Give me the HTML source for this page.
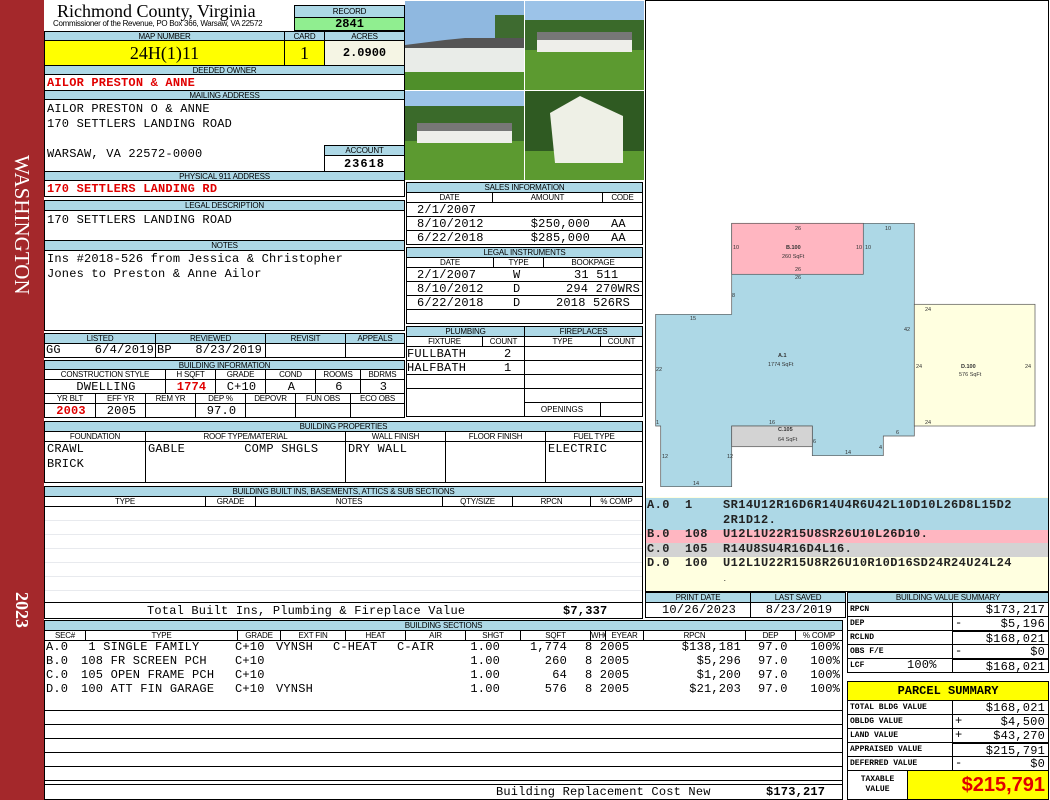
<!DOCTYPE html>
<html><head><meta charset="utf-8"><style>
*{margin:0;padding:0;box-sizing:border-box}
body{width:1050px;height:800px;background:#fff;position:relative;overflow:hidden;font-family:"Liberation Mono",monospace;font-size:12px;color:#000}
div{position:absolute;white-space:nowrap;overflow:hidden}
.b{border:1px solid #000}
.h{background:#add8e6;border:1px solid #000;font:8px/9px "Liberation Sans",sans-serif;text-align:center;letter-spacing:-0.2px}
.m{font:12px/14px "Liberation Mono",monospace;letter-spacing:0.2px;padding-left:2px}
.t{font:12px/14px "Liberation Mono",monospace;letter-spacing:0.2px;overflow:visible}
.r{text-align:right;padding-right:3px}
.c{text-align:center}
.red{color:#e00000;font-weight:bold}
.s{font:bold 8px/13px "Liberation Mono",monospace;padding-left:2px}
</style></head><body>
<!-- sidebar -->
<div style="left:0;top:0;width:44px;height:800px;background:#a4282b"></div>
<div style="left:8px;top:155px;width:28px;height:170px;"><div style="left:0;top:0;width:170px;height:28px;transform-origin:0 0;transform:translate(28px,0) rotate(90deg);font:21px/28px 'Liberation Serif',serif;color:#fff;text-align:left">WASHINGTON</div></div>
<div style="left:8px;top:592px;width:28px;height:40px;"><div style="left:0;top:0;width:40px;height:28px;transform-origin:0 0;transform:translate(28px,0) rotate(90deg);font:bold 18px/28px 'Liberation Serif',serif;color:#fff">2023</div></div>

<!-- title -->
<div style="left:57px;top:1px;width:230px;height:20px;font:18px/20px 'Liberation Serif',serif">Richmond County, Virginia</div>
<div style="left:53px;top:19px;width:240px;height:10px;font:8px/10px 'Liberation Sans',sans-serif;letter-spacing:-0.3px">Commissioner of the Revenue, PO Box 366, Warsaw, VA 22572</div>
<div class="h" style="left:294px;top:5px;width:111px;height:13px;line-height:11px">RECORD</div>
<div class="b" style="left:294px;top:17px;width:111px;height:14px;background:#90ee90;font:bold 12px/12px 'Liberation Mono',monospace;text-align:center">2841</div>

<div class="h" style="left:44px;top:31px;width:241px;height:10px">MAP NUMBER</div>
<div class="h" style="left:284px;top:31px;width:41px;height:10px">CARD</div>
<div class="h" style="left:324px;top:31px;width:81px;height:10px">ACRES</div>
<div class="b" style="left:44px;top:40px;width:241px;height:26px;background:#ffff00;font:18px/24px 'Liberation Serif',serif;text-align:center">24H(1)11</div>
<div class="b" style="left:284px;top:40px;width:41px;height:26px;background:#ffff00;font:18px/24px 'Liberation Serif',serif;text-align:center">1</div>
<div class="b" style="left:324px;top:40px;width:81px;height:26px;background:#f5f5e4;font:bold 12px/24px 'Liberation Mono',monospace;text-align:center">2.0900</div>

<div class="h" style="left:44px;top:65px;width:361px;height:10px">DEEDED OWNER</div>
<div class="b m red" style="left:44px;top:74px;width:361px;height:17px;line-height:17px">AILOR PRESTON &amp; ANNE</div>
<div class="h" style="left:44px;top:90px;width:361px;height:10px">MAILING ADDRESS</div>
<div class="b" style="left:44px;top:99px;width:361px;height:73px"></div>
<div class="m" style="left:45px;top:102px;width:270px;height:60px;white-space:pre;line-height:15px">AILOR PRESTON O &amp; ANNE
170 SETTLERS LANDING ROAD

WARSAW, VA 22572-0000</div>
<div class="h" style="left:324px;top:145px;width:81px;height:11px">ACCOUNT</div>
<div class="b" style="left:324px;top:155px;width:81px;height:17px;font:bold 12px/16px 'Liberation Mono',monospace;text-align:center;letter-spacing:1px">23618</div>
<div class="h" style="left:44px;top:171px;width:361px;height:10px">PHYSICAL 911 ADDRESS</div>
<div class="b m red" style="left:44px;top:180px;width:361px;height:17px;line-height:17px">170 SETTLERS LANDING RD</div>

<div class="h" style="left:44px;top:200px;width:361px;height:11px">LEGAL DESCRIPTION</div>
<div class="b m" style="left:44px;top:210px;width:361px;height:31px;padding-top:2px">170 SETTLERS LANDING ROAD</div>
<div class="h" style="left:44px;top:240px;width:361px;height:11px">NOTES</div>
<div class="b m" style="left:44px;top:250px;width:361px;height:81px;white-space:pre;line-height:15px;padding-top:1px">Ins #2018-526 from Jessica &amp; Christopher
Jones to Preston &amp; Anne Ailor</div>

<!-- listed -->
<div class="h" style="left:44px;top:333px;width:112px;height:11px">LISTED</div>
<div class="h" style="left:155px;top:333px;width:111px;height:11px">REVIEWED</div>
<div class="h" style="left:265px;top:333px;width:81px;height:11px">REVISIT</div>
<div class="h" style="left:345px;top:333px;width:60px;height:11px">APPEALS</div>
<div class="b" style="left:44px;top:343px;width:112px;height:15px"></div>
<div class="b" style="left:155px;top:343px;width:111px;height:15px"></div>
<div class="b" style="left:265px;top:343px;width:81px;height:15px"></div>
<div class="b" style="left:345px;top:343px;width:60px;height:15px"></div>
<div class="t" style="left:46px;top:343px;width:20px;height:14px">GG</div>
<div class="t r" style="left:80px;top:343px;width:76px;height:14px;padding-right:2px">6/4/2019</div>
<div class="t" style="left:157px;top:343px;width:20px;height:14px">BP</div>
<div class="t r" style="left:180px;top:343px;width:85px;height:14px;padding-right:3px">8/23/2019</div>

<!-- building info -->
<div class="h" style="left:44px;top:360px;width:361px;height:10px">BUILDING INFORMATION</div>
<div class="h" style="left:44px;top:369px;width:122px;height:11px;background:#fff">CONSTRUCTION STYLE</div>
<div class="h" style="left:165px;top:369px;width:51px;height:11px;background:#fff">H SQFT</div>
<div class="h" style="left:215px;top:369px;width:51px;height:11px;background:#fff">GRADE</div>
<div class="h" style="left:265px;top:369px;width:51px;height:11px;background:#fff">COND</div>
<div class="h" style="left:315px;top:369px;width:46px;height:11px;background:#fff">ROOMS</div>
<div class="h" style="left:360px;top:369px;width:45px;height:11px;background:#fff">BDRMS</div>
<div class="b m c" style="left:44px;top:379px;width:122px;height:15px">DWELLING</div>
<div class="b m c red" style="left:165px;top:379px;width:51px;height:15px">1774</div>
<div class="b m c" style="left:215px;top:379px;width:51px;height:15px">C+10</div>
<div class="b m c" style="left:265px;top:379px;width:51px;height:15px">A</div>
<div class="b m c" style="left:315px;top:379px;width:46px;height:15px">6</div>
<div class="b m c" style="left:360px;top:379px;width:45px;height:15px">3</div>
<div class="h" style="left:44px;top:393px;width:52px;height:11px;background:#fff">YR BLT</div>
<div class="h" style="left:95px;top:393px;width:51px;height:11px;background:#fff">EFF YR</div>
<div class="h" style="left:145px;top:393px;width:51px;height:11px;background:#fff">REM YR</div>
<div class="h" style="left:195px;top:393px;width:51px;height:11px;background:#fff">DEP %</div>
<div class="h" style="left:245px;top:393px;width:51px;height:11px;background:#fff">DEPOVR</div>
<div class="h" style="left:295px;top:393px;width:56px;height:11px;background:#fff">FUN OBS</div>
<div class="h" style="left:350px;top:393px;width:55px;height:11px;background:#fff">ECO OBS</div>
<div class="b m c red" style="left:44px;top:403px;width:52px;height:15px">2003</div>
<div class="b m c" style="left:95px;top:403px;width:51px;height:15px">2005</div>
<div class="b m" style="left:145px;top:403px;width:51px;height:15px"></div>
<div class="b m c" style="left:195px;top:403px;width:51px;height:15px">97.0</div>
<div class="b" style="left:245px;top:403px;width:51px;height:15px"></div>
<div class="b" style="left:295px;top:403px;width:56px;height:15px"></div>
<div class="b" style="left:350px;top:403px;width:55px;height:15px"></div>

<!-- photos -->
<div style="left:405px;top:0;width:240px;height:181px;background:#fff">
<svg width="240" height="181">
<g>
<rect x="0" y="1" width="119" height="89" fill="#8fb8e0"/><rect x="90" y="15" width="29" height="35" fill="#3e6b30"/><rect x="0" y="70" width="119" height="20" fill="#4f8f2a"/>
<polygon points="0,45 40,40 60,38 119,38 119,50 0,50" fill="#555"/><rect x="0" y="48" width="119" height="24" fill="#e9ece8"/>
</g>
<g transform="translate(120,0)">
<rect x="0" y="1" width="119" height="89" fill="#9cc3e8"/><rect x="0" y="20" width="119" height="35" fill="#3a6a2a"/><rect x="0" y="50" width="119" height="40" fill="#5c9a30"/>
<rect x="12" y="32" width="95" height="9" fill="#777"/><rect x="12" y="40" width="95" height="12" fill="#eeeeea"/>
</g>
<g transform="translate(0,91)">
<rect x="0" y="0" width="119" height="89" fill="#9cc3e8"/><rect x="0" y="15" width="119" height="35" fill="#3a6a2a"/><rect x="0" y="50" width="119" height="39" fill="#5c9a30"/>
<rect x="12" y="32" width="95" height="9" fill="#777"/><rect x="12" y="40" width="95" height="12" fill="#eeeeea"/>
</g>
<g transform="translate(120,91)">
<rect x="0" y="0" width="119" height="89" fill="#2f5a22"/><rect x="0" y="60" width="119" height="29" fill="#5c9a30"/>
<polygon points="25,22 55,5 98,25 98,72 30,72" fill="#eef0e6"/>
</g>
</svg></div>

<!-- sales -->
<div class="h" style="left:406px;top:182px;width:237px;height:11px">SALES INFORMATION</div>
<div class="h" style="left:406px;top:192px;width:87px;height:11px;background:#fff">DATE</div>
<div class="h" style="left:492px;top:192px;width:111px;height:11px;background:#fff">AMOUNT</div>
<div class="h" style="left:602px;top:192px;width:41px;height:11px;background:#fff">CODE</div>
<div class="b" style="left:406px;top:202px;width:237px;height:43px"></div>
<div style="left:407px;top:216px;width:235px;height:1px;background:#000"></div>
<div style="left:407px;top:230px;width:235px;height:1px;background:#000"></div>
<div class="t" style="left:417px;top:203px;width:80px;height:14px">2/1/2007</div>
<div class="t" style="left:417px;top:217px;width:80px;height:14px">8/10/2012</div>
<div class="t" style="left:417px;top:231px;width:80px;height:14px">6/22/2018</div>
<div class="t r" style="left:500px;top:217px;width:93px;height:14px">$250,000</div>
<div class="t r" style="left:500px;top:231px;width:93px;height:14px">$285,000</div>
<div class="t" style="left:611px;top:217px;width:20px;height:14px">AA</div>
<div class="t" style="left:611px;top:231px;width:20px;height:14px">AA</div>

<div class="h" style="left:406px;top:247px;width:237px;height:11px">LEGAL INSTRUMENTS</div>
<div class="h" style="left:406px;top:257px;width:88px;height:11px;background:#fff">DATE</div>
<div class="h" style="left:493px;top:257px;width:51px;height:11px;background:#fff">TYPE</div>
<div class="h" style="left:543px;top:257px;width:100px;height:11px;background:#fff">BOOKPAGE</div>
<div class="b" style="left:406px;top:267px;width:237px;height:57px"></div>
<div style="left:407px;top:281px;width:235px;height:1px;background:#000"></div>
<div style="left:407px;top:295px;width:235px;height:1px;background:#000"></div>
<div style="left:407px;top:309px;width:235px;height:1px;background:#000"></div>
<div class="t" style="left:417px;top:268px;width:80px;height:14px">2/1/2007</div>
<div class="t" style="left:417px;top:282px;width:80px;height:14px">8/10/2012</div>
<div class="t" style="left:417px;top:296px;width:80px;height:14px">6/22/2018</div>
<div class="t" style="left:513px;top:268px;width:10px;height:14px">W</div>
<div class="t" style="left:513px;top:282px;width:10px;height:14px">D</div>
<div class="t" style="left:513px;top:296px;width:10px;height:14px">D</div>
<div class="t" style="left:574px;top:268px;width:60px;height:14px">31 511</div>
<div class="t" style="left:566px;top:282px;width:76px;height:14px">294 270WRS</div>
<div class="t" style="left:556px;top:296px;width:76px;height:14px">2018 526RS</div>

<!-- plumbing -->
<div class="h" style="left:406px;top:326px;width:119px;height:11px">PLUMBING</div>
<div class="h" style="left:524px;top:326px;width:119px;height:11px">FIREPLACES</div>
<div class="h" style="left:406px;top:336px;width:77px;height:11px;background:#fff">FIXTURE</div>
<div class="h" style="left:482px;top:336px;width:43px;height:11px;background:#fff">COUNT</div>
<div class="h" style="left:524px;top:336px;width:77px;height:11px;background:#fff">TYPE</div>
<div class="h" style="left:600px;top:336px;width:43px;height:11px;background:#fff">COUNT</div>
<div class="b" style="left:406px;top:346px;width:119px;height:71px"></div>
<div class="b" style="left:524px;top:346px;width:119px;height:71px"></div>
<div class="t" style="left:407px;top:347px;width:70px;height:14px">FULLBATH</div>
<div class="t" style="left:407px;top:361px;width:70px;height:14px">HALFBATH</div>
<div class="t" style="left:504px;top:347px;width:10px;height:14px">2</div>
<div class="t" style="left:504px;top:361px;width:10px;height:14px">1</div>
<div style="left:407px;top:360px;width:235px;height:1px;background:#000"></div>
<div style="left:407px;top:374px;width:235px;height:1px;background:#000"></div>
<div style="left:407px;top:388px;width:235px;height:1px;background:#000"></div>
<div style="left:524px;top:402px;width:119px;height:1px;background:#000"></div>
<div style="left:600px;top:402px;width:1px;height:15px;background:#000"></div>
<div style="left:524px;top:403px;width:76px;height:14px;font:8px/14px 'Liberation Sans',sans-serif;text-align:center">OPENINGS</div>

<!-- building properties -->
<div class="h" style="left:44px;top:421px;width:599px;height:11px">BUILDING PROPERTIES</div>
<div class="h" style="left:44px;top:431px;width:102px;height:11px;background:#fff">FOUNDATION</div>
<div class="h" style="left:145px;top:431px;width:201px;height:11px;background:#fff">ROOF TYPE/MATERIAL</div>
<div class="h" style="left:345px;top:431px;width:101px;height:11px;background:#fff">WALL FINISH</div>
<div class="h" style="left:445px;top:431px;width:101px;height:11px;background:#fff">FLOOR FINISH</div>
<div class="h" style="left:545px;top:431px;width:98px;height:11px;background:#fff">FUEL TYPE</div>
<div class="b m" style="left:44px;top:441px;width:102px;height:42px;white-space:pre;line-height:15px">CRAWL
BRICK</div>
<div class="b m" style="left:145px;top:441px;width:201px;height:42px;white-space:pre;line-height:15px">GABLE        COMP SHGLS</div>
<div class="b m" style="left:345px;top:441px;width:101px;height:42px;line-height:15px">DRY WALL</div>
<div class="b" style="left:445px;top:441px;width:101px;height:42px"></div>
<div class="b m" style="left:545px;top:441px;width:98px;height:42px;line-height:15px">ELECTRIC</div>

<!-- built ins -->
<div class="h" style="left:44px;top:486px;width:599px;height:11px">BUILDING BUILT INS, BASEMENTS, ATTICS &amp; SUB SECTIONS</div>
<div class="h" style="left:44px;top:496px;width:162px;height:11px;background:#fff">TYPE</div>
<div class="h" style="left:205px;top:496px;width:51px;height:11px;background:#fff">GRADE</div>
<div class="h" style="left:255px;top:496px;width:188px;height:11px;background:#fff">NOTES</div>
<div class="h" style="left:442px;top:496px;width:71px;height:11px;background:#fff">QTY/SIZE</div>
<div class="h" style="left:512px;top:496px;width:79px;height:11px;background:#fff">RPCN</div>
<div class="h" style="left:590px;top:496px;width:53px;height:11px;background:#fff">% COMP</div>
<div class="b" style="left:44px;top:506px;width:599px;height:97px;background:repeating-linear-gradient(#fff 0,#fff 13px,#e8eaee 13px,#e8eaee 14px)"></div>
<div class="b" style="left:44px;top:602px;width:599px;height:17px"></div>
<div class="t" style="left:147px;top:603px;width:340px;height:15px;line-height:16px">Total Built Ins, Plumbing &amp; Fireplace Value</div>
<div class="t" style="left:563px;top:603px;width:60px;height:15px;line-height:16px;font-weight:bold">$7,337</div>

<!-- building sections -->
<div class="h" style="left:44px;top:620px;width:799px;height:11px">BUILDING SECTIONS</div>
<div class="h" style="left:44px;top:630px;width:42px;height:11px;background:#fff">SEC#</div>
<div class="h" style="left:85px;top:630px;width:153px;height:11px;background:#fff">TYPE</div>
<div class="h" style="left:237px;top:630px;width:44px;height:11px;background:#fff">GRADE</div>
<div class="h" style="left:280px;top:630px;width:66px;height:11px;background:#fff">EXT FIN</div>
<div class="h" style="left:345px;top:630px;width:61px;height:11px;background:#fff">HEAT</div>
<div class="h" style="left:405px;top:630px;width:61px;height:11px;background:#fff">AIR</div>
<div class="h" style="left:465px;top:630px;width:56px;height:11px;background:#fff">SHGT</div>
<div class="h" style="left:520px;top:630px;width:71px;height:11px;background:#fff">SQFT</div>
<div class="h" style="left:590px;top:630px;width:16px;height:11px;background:#fff">WHGT</div>
<div class="h" style="left:605px;top:630px;width:39px;height:11px;background:#fff">EYEAR</div>
<div class="h" style="left:643px;top:630px;width:103px;height:11px;background:#fff">RPCN</div>
<div class="h" style="left:745px;top:630px;width:51px;height:11px;background:#fff">DEP</div>
<div class="h" style="left:795px;top:630px;width:48px;height:11px;background:#fff">% COMP</div>
<div class="b" style="left:44px;top:640px;width:799px;height:145px;background:repeating-linear-gradient(#fff 0,#fff 13px,#000 13px,#000 14px)"></div>
<div style="left:45px;top:641px;width:797px;height:56px;background:#fff"></div>
<div class="t" style="left:46px;top:640px;width:40px;height:56px;white-space:pre">A.0
B.0
C.0
D.0</div>
<div class="t" style="left:81px;top:640px;width:150px;height:56px;white-space:pre"> 1 SINGLE FAMILY
108 FR SCREEN PCH
105 OPEN FRAME PCH
100 ATT FIN GARAGE</div>
<div class="t" style="left:235px;top:640px;width:40px;height:56px;white-space:pre">C+10
C+10
C+10
C+10</div>
<div class="t" style="left:276px;top:640px;width:50px;height:56px;white-space:pre">VYNSH


VYNSH</div>
<div class="t" style="left:333px;top:640px;width:50px;height:56px">C-HEAT</div>
<div class="t" style="left:397px;top:640px;width:50px;height:56px">C-AIR</div>
<div class="t" style="left:460px;top:640px;width:40px;height:56px;white-space:pre;text-align:right">1.00
1.00
1.00
1.00</div>
<div class="t" style="left:510px;top:640px;width:57px;height:56px;white-space:pre;text-align:right">1,774
260
64
576</div>
<div class="t" style="left:585px;top:640px;width:50px;height:56px;white-space:pre">8 2005
8 2005
8 2005
8 2005</div>
<div class="t" style="left:660px;top:640px;width:81px;height:56px;white-space:pre;text-align:right">$138,181
$5,296
$1,200
$21,203</div>
<div class="t" style="left:758px;top:640px;width:40px;height:56px;white-space:pre">97.0
97.0
97.0
97.0</div>
<div class="t" style="left:800px;top:640px;width:40px;height:56px;white-space:pre;text-align:right">100%
100%
100%
100%</div>
<div class="b" style="left:44px;top:784px;width:799px;height:16px"></div>
<div class="t" style="left:496px;top:785px;width:240px;height:14px">Building Replacement Cost New</div>
<div class="t" style="left:766px;top:785px;width:70px;height:14px;font-weight:bold">$173,217</div>

<!-- sketch -->
<div class="b" style="left:645px;top:0;width:404px;height:498px">
<svg width="404" height="498" style="position:absolute;left:-1px;top:-1px" font-family="Liberation Sans" font-size="5.5">
<polygon points="86.7,223.3 269.3,223.3 269.3,436 238.3,436 238.3,455.7 167.3,455.7 167.3,426 86.7,426 86.7,486.7 15.7,486.7 15.7,426 10.7,426 10.7,314.3 86.7,314.3" fill="#add8e6" stroke="#555" stroke-width="0.7"/>
<rect x="86.7" y="223.3" width="131.6" height="51" fill="#ffb6c1" stroke="#555" stroke-width="0.7"/>
<rect x="86.7" y="426" width="80.6" height="20.7" fill="#d3d3d3" stroke="#555" stroke-width="0.7"/>
<rect x="269.3" y="304.3" width="120.7" height="121.7" fill="#ffffe0" stroke="#555" stroke-width="0.7"/>
<g fill="#333">
<text x="150" y="230">26</text><text x="240" y="230">10</text><text x="88" y="249">10</text><text x="211" y="249">10</text><text x="220" y="249">10</text>
<text x="141" y="249" font-weight="bold">B.100</text><text x="137" y="258">260 SqFt</text>
<text x="150" y="271">26</text><text x="150" y="279">26</text><text x="87" y="297">8</text><text x="45" y="320">15</text>
<text x="280" y="311">24</text><text x="259" y="331">42</text><text x="11" y="371">22</text>
<text x="133" y="357" font-weight="bold">A.1</text><text x="123" y="366">1774 SqFt</text>
<text x="271" y="368">24</text><text x="380" y="368">24</text>
<text x="316" y="368" font-weight="bold">D.100</text><text x="314" y="376">576 SqFt</text>
<text x="280" y="424">24</text><text x="11" y="424">1</text><text x="124" y="424">16</text>
<text x="133" y="431" font-weight="bold">C.105</text><text x="133" y="441">64 SqFt</text>
<text x="168" y="443">6</text><text x="251" y="434">6</text><text x="234" y="449">4</text><text x="200" y="454">14</text>
<text x="17" y="458">12</text><text x="82" y="458">12</text><text x="48" y="485">14</text>
</g></svg></div>

<!-- codes -->
<div style="left:645px;top:497px;width:404px;height:95px;border:1px solid #000;border-top:0;background:#ffffe0"></div>
<div style="left:646px;top:498px;width:402px;height:32px;background:#add8e6"></div>
<div style="left:646px;top:530px;width:402px;height:13px;background:#ffb6c1"></div>
<div style="left:646px;top:543px;width:402px;height:14px;background:#d3d3d3"></div>
<div style="left:647px;top:498px;width:400px;height:92px;white-space:pre;font:bold 12px/14.5px 'Liberation Mono',monospace;color:#222;letter-spacing:0.4px">A.0  1    SR14U12R16D6R14U4R6U42L10D10L26D8L15D2
          2R1D12.
B.0  108  U12L1U22R15U8SR26U10L26D10.
C.0  105  R14U8SU4R16D4L16.
D.0  100  U12L1U22R15U8R26U10R10D16SD24R24U24L24
          <span style="font-size:6px">.</span></div>

<!-- print date -->
<div class="h" style="left:645px;top:592px;width:106px;height:11px">PRINT DATE</div>
<div class="h" style="left:750px;top:592px;width:96px;height:11px">LAST SAVED</div>
<div class="b m c" style="left:645px;top:602px;width:106px;height:16px">10/26/2023</div>
<div class="b m c" style="left:750px;top:602px;width:96px;height:16px">8/23/2019</div>

<!-- building value summary -->
<div class="h" style="left:847px;top:592px;width:202px;height:11px">BUILDING VALUE SUMMARY</div>
<div class="b s" style="left:847px;top:602px;width:106px;height:15px">RPCN</div><div class="b m r" style="left:952px;top:602px;width:97px;height:15px">$173,217</div>
<div class="b s" style="left:847px;top:616px;width:106px;height:15px">DEP</div><div class="b m r" style="left:952px;top:616px;width:97px;height:15px">$5,196</div>
<div class="b s" style="left:847px;top:630px;width:106px;height:15px">RCLND</div><div class="b m r" style="left:952px;top:630px;width:97px;height:15px;border-top-width:2px">$168,021</div>
<div class="b s" style="left:847px;top:644px;width:106px;height:15px">OBS F/E</div><div class="b m r" style="left:952px;top:644px;width:97px;height:15px">$0</div>
<div class="b s" style="left:847px;top:658px;width:106px;height:15px">LCF</div><div class="t" style="left:907px;top:658px;width:36px;height:14px">100%</div><div class="b m r" style="left:952px;top:658px;width:97px;height:15px;border-top-width:2px">$168,021</div>
<div class="t" style="left:955px;top:616px;width:10px;height:14px">-</div>
<div class="t" style="left:955px;top:644px;width:10px;height:14px">-</div>

<!-- parcel summary -->
<div class="b" style="left:847px;top:681px;width:202px;height:20px;background:#ffff00;font:bold 12px/18px 'Liberation Mono',monospace;text-align:center">PARCEL SUMMARY</div>
<div class="b s" style="left:847px;top:700px;width:106px;height:15px">TOTAL BLDG VALUE</div><div class="b m r" style="left:952px;top:700px;width:97px;height:15px">$168,021</div>
<div class="b s" style="left:847px;top:714px;width:106px;height:15px">OBLDG VALUE</div><div class="b m r" style="left:952px;top:714px;width:97px;height:15px">$4,500</div>
<div class="b s" style="left:847px;top:728px;width:106px;height:15px">LAND VALUE</div><div class="b m r" style="left:952px;top:728px;width:97px;height:15px">$43,270</div>
<div class="b s" style="left:847px;top:742px;width:106px;height:15px">APPRAISED VALUE</div><div class="b m r" style="left:952px;top:742px;width:97px;height:15px;border-top-width:2px">$215,791</div>
<div class="b s" style="left:847px;top:756px;width:106px;height:15px">DEFERRED VALUE</div><div class="b m r" style="left:952px;top:756px;width:97px;height:15px">$0</div>
<div class="t" style="left:955px;top:714px;width:10px;height:14px">+</div>
<div class="t" style="left:955px;top:728px;width:10px;height:14px">+</div>
<div class="t" style="left:955px;top:756px;width:10px;height:14px">-</div>
<div class="b" style="left:847px;top:770px;width:61px;height:30px;font:bold 8px/10px 'Liberation Mono',monospace;text-align:center;padding-top:4px;white-space:pre">TAXABLE
VALUE</div>
<div class="b" style="left:907px;top:770px;width:142px;height:30px;background:#ffff00;color:#e00000;font:bold 20px/28px 'Liberation Sans',sans-serif;text-align:right;padding-right:3px">$215,791</div>
</body></html>
